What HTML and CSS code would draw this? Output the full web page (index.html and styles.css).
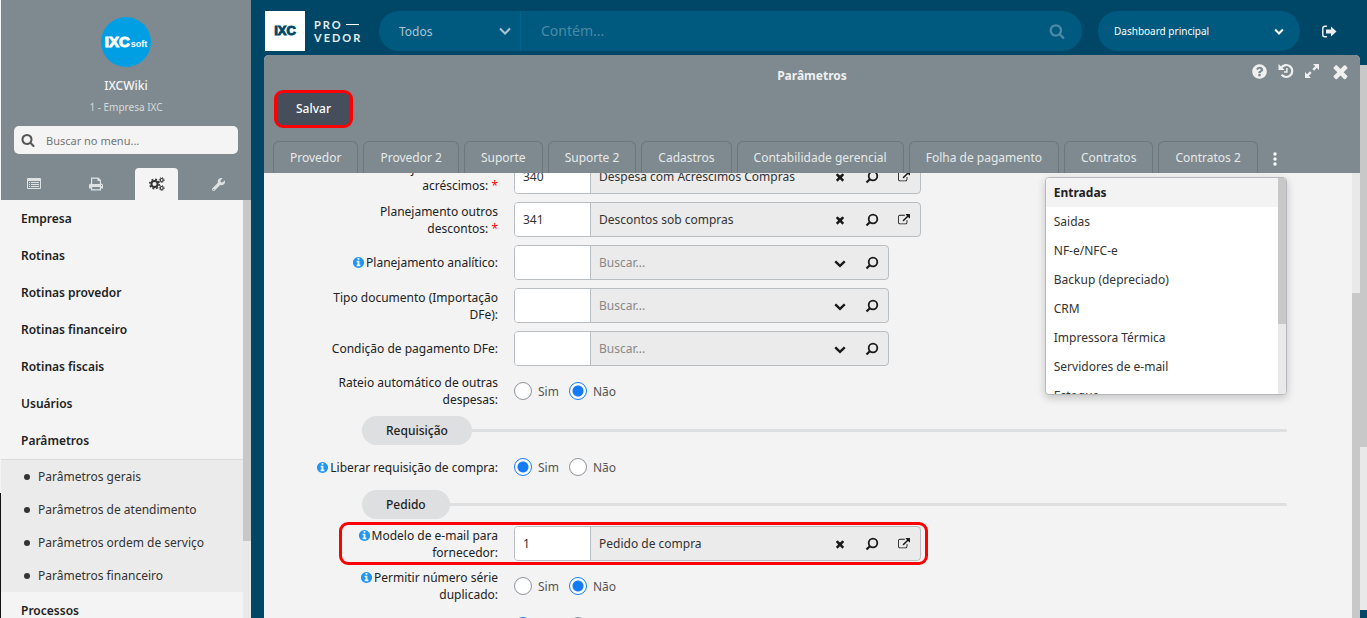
FILE: index.html
```html
<!DOCTYPE html>
<html lang="pt-BR">
<head>
<meta charset="utf-8">
<title>Parâmetros</title>
<link rel="stylesheet" href="styles.css">
</head>
<body>
<svg class="sprite" aria-hidden="true">
  <symbol id="search" viewBox="0 0 1792 1792"><path d="M1216 832q0-185-131.5-316.5t-316.5-131.5-316.5 131.5-131.5 316.5 131.5 316.5 316.5 131.5 316.5-131.5 131.5-316.5zm512 832q0 52-38 90t-90 38q-54 0-90-38l-343-342q-179 124-399 124-143 0-273.5-55.5t-225-150-150-225-55.5-273.5 55.5-273.5 150-225 225-150 273.5-55.5 273.5 55.5 225 150 150 225 55.5 273.5q0 220-124 399l343 343q37 37 37 90z"/></symbol>
  <symbol id="times" viewBox="0 0 1792 1792"><path d="M1490 1322q0 40-28 68l-136 136q-28 28-68 28t-68-28l-294-294-294 294q-28 28-68 28t-68-28l-136-136q-28-28-28-68t28-68l294-294-294-294q-28-28-28-68t28-68l136-136q28-28 68-28t68 28l294 294 294-294q28-28 68-28t68 28l136 136q28 28 28 68t-28 68l-294 294 294 294q28 28 28 68z"/></symbol>
  <symbol id="chevron" viewBox="0 0 1792 1792"><path d="M1683 808l-742 741q-19 19-45 19t-45-19l-742-741q-19-19-19-45.500t19-45.500l166-165q19-19 45-19t45 19l531 531 531-531q19-19 45-19t45 19l166 165q19 19 19 45.500t-19 45.500z"/></symbol>
  <symbol id="info" viewBox="0 0 1792 1792"><path d="M1152 1376v-160q0-14-9-23t-23-9h-96v-512q0-14-9-23t-23-9h-320q-14 0-23 9t-9 23v160q0 14 9 23t23 9h96v320h-96q-14 0-23 9t-9 23v160q0 14 9 23t23 9h448q14 0 23-9t9-23zm-128-896v-160q0-14-9-23t-23-9h-192q-14 0-23 9t-9 23v160q0 14 9 23t23 9h192q14 0 23-9t9-23zm640 416q0 209-103 385.500t-279.500 279.500-385.500 103-385.500-103-279.500-279.500-103-385.500 103-385.500 279.500-279.500 385.500-103 385.500 103 279.500 279.500 103 385.500z"/></symbol>
  <symbol id="help" viewBox="0 0 1792 1792"><path d="M1024 1376v-192q0-14-9-23t-23-9h-192q-14 0-23 9t-9 23v192q0 14 9 23t23 9h192q14 0 23-9t9-23zm256-672q0-88-55.500-163t-138.500-116-170-41q-243 0-371 213-15 24 8 42l132 100q7 6 19 6 16 0 25-12 53-68 86-92 34-24 86-24 48 0 85.500 26t37.500 59q0 38-20 61t-68 45q-63 28-115.500 86.500t-52.500 125.500v36q0 14 9 23t23 9h192q14 0 23-9t9-23q0-19 21.500-49.500t54.500-49.500q32-18 49-28.500t46-35 44.500-48 28-60.500 12.500-81zm384 192q0 209-103 385.500t-279.500 279.500-385.500 103-385.500-103-279.500-279.500-103-385.500 103-385.500 279.500-279.500 385.500-103 385.500 103 279.500 279.500 103 385.500z"/></symbol>
  <symbol id="external" viewBox="0 0 1792 1792"><path d="M1408 928v320q0 119-84.500 203.500t-203.500 84.500h-832q-119 0-203.500-84.500t-84.500-203.500v-832q0-119 84.500-203.500t203.500-84.500h704q14 0 23 9t9 23v64q0 14-9 23t-23 9h-704q-66 0-113 47t-47 113v832q0 66 47 113t113 47h832q66 0 113-47t47-113v-320q0-14 9-23t23-9h64q14 0 23 9t9 23zm384-864v512q0 26-19 45t-45 19-45-19l-176-176-652 652q-10 10-23 10t-23-10l-114-114q-10-10-10-23t10-23l652-652-176-176q-19-19-19-45t19-45 45-19h512q26 0 45 19t19 45z"/></symbol>
  <symbol id="lens" viewBox="0 0 14 14"><circle cx="8" cy="6" r="4.300" fill="none" stroke="currentColor" stroke-width="1.800"/><path d="M4.800 9.200L1.500 12.500" stroke="currentColor" stroke-width="2.200"/></symbol>
  <symbol id="wrench" viewBox="0 0 512 512"><path d="M507.730 109.100c-2.240-9.030-13.540-12.090-20.120-5.510l-74.360 74.360-67.880-11.310-11.310-67.880 74.360-74.360c6.620-6.620 3.430-17.900-5.660-20.160-47.380-11.740-99.550.910-136.580 37.930-39.640 39.640-50.550 97.100-34.050 147.200L18.740 402.760c-24.990 24.990-24.990 65.510 0 90.500 24.990 24.990 65.510 24.990 90.500 0l213.210-213.210c50.120 16.710 107.470 5.680 147.370-34.220 37.070-37.070 49.700-89.320 37.910-136.730zM64 472c-13.250 0-24-10.750-24-24 0-13.260 10.750-24 24-24s24 10.750 24 24c0 13.250-10.750 24-24 24z"/></symbol>
  <symbol id="list" viewBox="0 0 14 12"><path fill-rule="evenodd" d="M1 0h12a1 1 0 0 1 1 1v9a1 1 0 0 1-1 1H1a1 1 0 0 1-1-1V1a1 1 0 0 1 1-1zM1 3v7h12V3zM2 4h1v1H2zm2 0h8v1H4zM2 6h1v1H2zm2 0h8v1H4zM2 8h1v1H2zm2 0h8v1H4z"/></symbol>
  <symbol id="print" viewBox="0 0 14 13"><path fill-rule="evenodd" d="M2 0h7.500L12 2.500V6a2 2 0 0 1 2 2v3h-2v2H2v-2H0V8a2 2 0 0 1 2-2zM3.200 1.200V6.500h7.600V3.600H8.500V1.200zM3.200 9.500v2.300h7.600V9.500zM12 7.500v1h1v-1z"/></symbol>
  <symbol id="cogs" viewBox="0 0 16 14"><g fill="none" stroke="currentColor"><circle cx="5.500" cy="7" r="3.100" stroke-width="2"/><circle cx="5.500" cy="7" r="4.700" stroke-width="1.600" stroke-dasharray="1.900 1.791"/><circle cx="12.700" cy="3" r="1.500" stroke-width="1.200"/><circle cx="12.700" cy="3" r="2.500" stroke-width=".900" stroke-dasharray="1 .963"/><circle cx="12.700" cy="11" r="1.500" stroke-width="1.200"/><circle cx="12.700" cy="11" r="2.500" stroke-width=".900" stroke-dasharray="1 .963"/></g></symbol>
  <symbol id="history" viewBox="0 0 16 16"><path d="M3.300 4.600A6 6 0 1 1 3.600 11.800" fill="none" stroke="currentColor" stroke-width="2.200"/><path d="M.500 1v6h6z"/><path d="M8.900 5v4H6" fill="none" stroke="currentColor" stroke-width="1.500"/></symbol>
  <symbol id="expand" viewBox="0 0 16 16"><path d="M9 1h6v6zM1 9v6h6z"/><path d="M12.500 3.500L9.200 6.800M6.800 9.200L3.500 12.500" stroke="currentColor" stroke-width="2.400"/></symbol>
  <symbol id="logout" viewBox="0 0 15 12"><path d="M5 .800H2.800a2 2 0 0 0-2 2v6.400a2 2 0 0 0 2 2H5" fill="none" stroke="currentColor" stroke-width="1.500"/><path d="M9 1l5.500 5L9 11V8H4V4h5z"/></symbol>
</svg>

<div class="app">
  <aside class="sidebar">
    <header class="profile">
      <div class="avatar"><b>IXC</b><span>soft</span></div>
      <strong class="user">IXCWiki</strong>
      <span class="company">1 - Empresa IXC</span>
      <label class="menu-search">
        <svg class="icon i14"><use href="#search"/></svg>
        <input type="search" placeholder="Buscar no menu..." aria-label="Buscar no menu">
      </label>
      <nav class="side-tabs">
        <button aria-label="Lista"><svg class="icon i14"><use href="#list"/></svg></button>
        <button aria-label="Imprimir"><svg class="icon i14"><use href="#print"/></svg></button>
        <button class="active" aria-label="Configurações"><svg class="icon i16"><use href="#cogs"/></svg></button>
        <button aria-label="Ferramentas"><svg class="icon i13"><use href="#wrench"/></svg></button>
      </nav>
    </header>
    <div class="menu-area">
      <nav class="menu">
        <a href="#">Empresa</a>
        <a href="#">Rotinas</a>
        <a href="#">Rotinas provedor</a>
        <a href="#">Rotinas financeiro</a>
        <a href="#">Rotinas fiscais</a>
        <a href="#">Usuários</a>
        <a href="#">Parâmetros</a>
        <ul class="submenu">
          <li><a href="#">Parâmetros gerais</a></li>
          <li><a href="#">Parâmetros de atendimento</a></li>
          <li><a href="#">Parâmetros ordem de serviço</a></li>
          <li><a href="#">Parâmetros financeiro</a></li>
        </ul>
        <a href="#">Processos</a>
      </nav>
      <div class="scrollbar menu-scroll"><i></i></div>
    </div>
  </aside>

  <div class="main">
    <header class="topbar">
      <div class="logo">
        <span class="logo-mark">IXC</span>
        <span class="logo-name"><span class="first">PRO<i></i></span><span>VEDOR</span></span>
      </div>
      <div class="search">
        <label class="scope">
          <select aria-label="Escopo"><option>Todos</option></select>
          <svg class="icon thin" viewBox="0 0 12 8"><path d="M1 1.500l5 5 5-5"/></svg>
        </label>
        <input type="search" placeholder="Contém..." aria-label="Contém">
        <button aria-label="Buscar"><svg class="icon i16"><use href="#search"/></svg></button>
      </div>
      <label class="dashboard">
        <select aria-label="Dashboard"><option>Dashboard principal</option></select>
        <svg class="icon i10"><use href="#chevron"/></svg>
      </label>
      <button class="logout" aria-label="Sair"><svg class="icon i15"><use href="#logout"/></svg></button>
    </header>

    <div class="workspace">
      <section class="window">
        <header class="window-head">
          <div class="title-row">
            <h1>Parâmetros</h1>
            <div class="window-actions">
              <button aria-label="Ajuda"><svg class="icon i17"><use href="#help"/></svg></button>
              <button aria-label="Histórico"><svg class="icon i16"><use href="#history"/></svg></button>
              <button aria-label="Expandir"><svg class="icon i16"><use href="#expand"/></svg></button>
              <button aria-label="Fechar"><svg class="icon i21"><use href="#times"/></svg></button>
            </div>
          </div>
          <button class="save">Salvar</button>
          <nav class="tabs">
            <button>Provedor</button>
            <button>Provedor 2</button>
            <button>Suporte</button>
            <button>Suporte 2</button>
            <button>Cadastros</button>
            <button>Contabilidade gerencial</button>
            <button>Folha de pagamento</button>
            <button>Contratos</button>
            <button>Contratos 2</button>
            <div class="more">
              <button aria-label="Mais abas"><svg class="icon dots" viewBox="0 0 4 14"><circle cx="2" cy="2" r="1.700"/><circle cx="2" cy="7" r="1.700"/><circle cx="2" cy="12" r="1.700"/></svg></button>
              <div class="dropdown">
                <ul>
                  <li><a class="current" href="#">Entradas</a></li>
                  <li><a href="#">Saidas</a></li>
                  <li><a href="#">NF-e/NFC-e</a></li>
                  <li><a href="#">Backup (depreciado)</a></li>
                  <li><a href="#">CRM</a></li>
                  <li><a href="#">Impressora Térmica</a></li>
                  <li><a href="#">Servidores de e-mail</a></li>
                  <li><a href="#">Estoque</a></li>
                </ul>
                <div class="scrollbar drop-scroll"><i></i></div>
              </div>
            </div>
          </nav>
        </header>

        <div class="window-body">
          <form class="form">
            <div class="row">
              <label class="caption" for="f1">Planejamento outros acréscimos:&nbsp;<em>*</em></label>
              <div class="lookup"><input class="code" id="f1" value="340"><input class="desc" aria-label="Descrição" value="Despesa com Acréscimos Compras"><button type="button" aria-label="Limpar"><svg class="icon i12"><use href="#times"/></svg></button><button type="button" aria-label="Buscar"><svg class="icon i14"><use href="#lens"/></svg></button><button type="button" aria-label="Abrir"><svg class="icon i12"><use href="#external"/></svg></button></div>
            </div>
            <div class="row">
              <label class="caption" for="f2">Planejamento outros descontos:&nbsp;<em>*</em></label>
              <div class="lookup"><input class="code" id="f2" value="341"><input class="desc" aria-label="Descrição" value="Descontos sob compras"><button type="button" aria-label="Limpar"><svg class="icon i12"><use href="#times"/></svg></button><button type="button" aria-label="Buscar"><svg class="icon i14"><use href="#lens"/></svg></button><button type="button" aria-label="Abrir"><svg class="icon i12"><use href="#external"/></svg></button></div>
            </div>
            <div class="row">
              <label class="caption" for="f3"><svg class="icon info"><use href="#info"/></svg>Planejamento analítico:</label>
              <div class="lookup"><input class="code" id="f3"><input class="desc" aria-label="Descrição" placeholder="Buscar..."><button type="button" aria-label="Listar"><svg class="icon i12"><use href="#chevron"/></svg></button><button type="button" aria-label="Buscar"><svg class="icon i14"><use href="#lens"/></svg></button></div>
            </div>
            <div class="row">
              <label class="caption" for="f4">Tipo documento (Importação DFe):</label>
              <div class="lookup"><input class="code" id="f4"><input class="desc" aria-label="Descrição" placeholder="Buscar..."><button type="button" aria-label="Listar"><svg class="icon i12"><use href="#chevron"/></svg></button><button type="button" aria-label="Buscar"><svg class="icon i14"><use href="#lens"/></svg></button></div>
            </div>
            <div class="row">
              <label class="caption" for="f5">Condição de pagamento DFe:</label>
              <div class="lookup"><input class="code" id="f5"><input class="desc" aria-label="Descrição" placeholder="Buscar..."><button type="button" aria-label="Listar"><svg class="icon i12"><use href="#chevron"/></svg></button><button type="button" aria-label="Buscar"><svg class="icon i14"><use href="#lens"/></svg></button></div>
            </div>
            <div class="row" role="radiogroup" aria-labelledby="g1">
              <span class="caption" id="g1">Rateio automático de outras despesas:</span>
              <div class="choices"><label><input type="radio" name="rateio">Sim</label><label><input type="radio" name="rateio" checked>Não</label></div>
            </div>

            <h2 class="section"><span>Requisição</span></h2>
            <div class="row" role="radiogroup" aria-labelledby="g2">
              <span class="caption" id="g2"><svg class="icon info"><use href="#info"/></svg>Liberar requisição de compra:</span>
              <div class="choices"><label><input type="radio" name="liberar" checked>Sim</label><label><input type="radio" name="liberar">Não</label></div>
            </div>

            <h2 class="section"><span>Pedido</span></h2>
            <div class="row marked">
              <label class="caption" for="f6"><svg class="icon info"><use href="#info"/></svg>Modelo de e-mail para fornecedor:</label>
              <div class="lookup"><input class="code" id="f6" value="1"><input class="desc" aria-label="Descrição" value="Pedido de compra"><button type="button" aria-label="Limpar"><svg class="icon i12"><use href="#times"/></svg></button><button type="button" aria-label="Buscar"><svg class="icon i14"><use href="#lens"/></svg></button><button type="button" aria-label="Abrir"><svg class="icon i12"><use href="#external"/></svg></button></div>
            </div>
            <div class="row" role="radiogroup" aria-labelledby="g3">
              <span class="caption" id="g3"><svg class="icon info"><use href="#info"/></svg>Permitir número série duplicado:</span>
              <div class="choices"><label><input type="radio" name="serie">Sim</label><label><input type="radio" name="serie" checked>Não</label></div>
            </div>
            <div class="row">
              <span class="caption"></span>
              <div class="choices"><input type="radio" name="extra" aria-label="Opção 1" checked><input class="apart" type="radio" name="extra" aria-label="Opção 2"></div>
            </div>
          </form>
          <div class="scrollbar body-scroll"><i></i></div>
        </div>
      </section>
      <div class="scrollbar page-scroll"><i></i></div>
    </div>
  </div>
</div>
</body>
</html>
```
FILE: styles.css
```css
* { box-sizing: border-box; }

body {
  margin: 0;
  font: 12px/17px "Noto Sans", "Open Sans", sans-serif;
  color: #222;
  background: #004767;
}

button, input, select { font: inherit; color: inherit; border: 0; margin: 0; padding: 0; background: none; }
button, select { cursor: pointer; }
input[type="search"] { appearance: none; outline: none; }
select { appearance: none; outline: none; }
a { color: inherit; text-decoration: none; }
ul { list-style: none; margin: 0; padding: 0; }

.sprite { position: absolute; width: 0; height: 0; }
.icon { display: block; flex: none; fill: currentColor; }
.i10 { width: 10px; height: 10px; }
.i12 { width: 12px; height: 12px; }
.i13 { width: 13px; height: 13px; }
.i14 { width: 14px; height: 14px; }
.i15 { width: 15px; height: 15px; }
.i16 { width: 16px; height: 16px; }
.i17 { width: 17px; height: 17px; }
.i21 { width: 21px; height: 21px; }

.app { display: flex; height: 100vh; overflow: hidden; }

/* Scrollbars */
.scrollbar { flex: none; width: 8px; background: #e9e9e9; }
.scrollbar i { display: block; background: #c8c8c8; }
.menu-scroll i { height: 341px; }
.drop-scroll i { height: 146px; }
.body-scroll { padding-top: 120px; }
.body-scroll i { height: 100%; }
.page-scroll { width: 7px; margin: 10px 0 8px; }
.page-scroll i { height: 70%; }

/* Sidebar */
.sidebar {
  flex: none;
  display: flex;
  flex-direction: column;
  width: 251px;
  padding-left: 1px;
  background: linear-gradient(#f4f4f4 493px, #111 493px);
}
.profile {
  display: flex;
  flex-direction: column;
  align-items: center;
  height: 200px;
  padding-top: 17px;
  background: #7e8a8f;
  color: #f4f4f4;
}
.avatar {
  display: flex;
  align-items: baseline;
  justify-content: center;
  gap: 1px;
  width: 50px;
  height: 50px;
  border-radius: 50%;
  background: #009fe3;
  color: #fff;
  font: 700 15px/50px "Liberation Sans", sans-serif;
}
.avatar b { -webkit-text-stroke: 1px #fff; }
.avatar span { font-size: 9px; }
.user { margin-top: 10px; font-weight: 500; }
.company { margin-top: 5px; font-size: 10px; color: #d6dadc; }
.menu-search {
  display: flex;
  align-items: center;
  align-self: stretch;
  gap: 11px;
  height: 28px;
  margin: 10px 13px 0;
  padding: 0 7px;
  border-radius: 5px;
  background: #f4f4f4;
  color: #555;
}
.menu-search input { flex: 1; min-width: 0; font-size: 11px; }
.menu-search input::placeholder { color: #757575; }
.side-tabs { display: flex; align-self: stretch; margin-top: 14px; padding: 0 2px; }
.side-tabs button { flex: 1; display: flex; align-items: center; justify-content: center; height: 32px; color: #dfe2e3; }
.side-tabs .active { flex: none; width: 43px; margin: 0 9px; border-radius: 4px 4px 0 0; background: #f4f4f4; color: #333; }

.menu-area { flex: 1; display: flex; min-height: 0; }
.menu { flex: 1; overflow: hidden; background: #f4f4f4; }
.menu > a { display: block; padding: 10px 20px; font-weight: 600; }
.submenu { border-top: 1px solid #dadada; background: #ebebeb; color: #333; }
.submenu a { display: flex; align-items: center; gap: 8px; padding: 8px 23px; white-space: nowrap; }
.submenu a::before { content: ""; width: 6px; height: 6px; border-radius: 50%; background: #333; }

/* Top bar */
.main { flex: 1; display: flex; flex-direction: column; min-width: 0; }
.topbar { display: flex; align-items: center; height: 55px; padding: 7px 30px 0 14px; }
.topbar, .topbar select { color: #fff; }
.logo { display: flex; align-items: center; gap: 9px; width: 114px; }
.logo-mark { width: 40px; height: 40px; background: #fff; color: #004767; font: 700 13px/40px "Liberation Sans", sans-serif; text-align: center; -webkit-text-stroke: 1px #004767; }
.logo-name { display: flex; flex-direction: column; font: 700 11px/13px Lato, sans-serif; letter-spacing: 2px; color: #e8eef1; }
.first { display: flex; align-items: center; gap: 3px; }
.first i { width: 13px; height: 1px; background: #fff; }
.search { flex: 1; display: flex; align-items: center; height: 40px; padding-right: 17px; border-radius: 20px; background: #005a80; }
.scope { display: flex; align-items: center; width: 142px; height: 40px; padding: 0 9px 0 20px; border-right: 1px solid #00648c; }
.scope select { flex: 1; color: #a9c5d3; }
.thin { width: 12px; height: 8px; fill: none; stroke: #a9c5d3; stroke-width: 2; }
.search input { flex: 1; min-width: 0; padding: 0 20px; font-size: 14px; line-height: 20px; }
.search input::placeholder { color: #4b8aa7; }
.search button { color: #4b8aa7; }
.dashboard { display: flex; align-items: center; width: 202px; height: 40px; margin-left: 16px; padding: 0 16px; border-radius: 20px; background: #005a80; }
.dashboard select { flex: 1; font-size: 10px; }
.logout { margin-left: 22px; color: #eee; }

/* Window */
.workspace { flex: 1; display: flex; min-height: 0; padding-left: 13px; }
.window { flex: 1; display: flex; flex-direction: column; min-width: 0; border-radius: 5px 5px 0 0; background: #f3f3f3; }
.window-head { height: 118px; padding: 0 9px; border-radius: 5px 5px 0 0; background: #7e8a8f; color: #f0f0f0; }
.title-row { display: grid; grid-template-columns: 1fr auto 1fr; align-items: center; height: 35px; }
.title-row h1 { grid-column: 2; margin: 6px 0 0; font-size: 12px; font-weight: 700; }
.window-actions { display: flex; align-items: center; justify-content: flex-end; gap: 10px; padding-bottom: 3px; }
.save {
  display: block;
  width: 79px;
  height: 38px;
  margin: 0 0 13px 1px;
  padding-bottom: 2px;
  border: 3px solid #f00;
  border-radius: 9px;
  background: #454e5a;
  color: #fff;
  font-weight: 500;
}
.tabs { display: flex; gap: 5px; }
.tabs > button { height: 32px; padding: 0 16px; border: 1px solid #6b777d; border-bottom: 0; border-radius: 6px 6px 0 0; color: #e6e9ea; white-space: nowrap; }
.more { position: relative; width: 24px; }
.more > button { display: flex; align-items: center; justify-content: center; width: 100%; height: 36px; color: #fff; }
.dots { width: 4px; height: 14px; }
.dropdown {
  position: absolute;
  top: 36px;
  right: 0;
  z-index: 2;
  display: flex;
  width: 242px;
  height: 218px;
  overflow: hidden;
  border: 1px solid #b5b9bd;
  border-radius: 4px;
  background: #fff;
  color: #333;
  box-shadow: 0 3px 8px #0003;
}
.dropdown ul { flex: 1; }
.dropdown li a { display: block; padding: 6px 8px; }
.dropdown .current { background: #f3f3f3; color: #222; font-weight: 700; }

/* Form */
.window-body { flex: 1; display: flex; min-height: 0; overflow: hidden; }
.form { flex: 1; min-width: 0; margin-top: -14px; padding: 0 65px 0 48px; }
.row { position: relative; display: flex; align-items: center; gap: 16px; width: fit-content; min-height: 30px; margin-bottom: 8px; }
.caption { width: 186px; text-align: right; }
.caption em { color: #f00; font-style: normal; }
.info { display: inline-block; width: 13px; height: 13px; margin-right: 1px; vertical-align: -2px; color: #2196f3; }
.lookup { display: flex; height: 35px; overflow: hidden; border: 1px solid #b9bec3; border-radius: 4px; background: #ebebeb; }
.lookup input { outline: none; padding: 0 8px; color: #333; }
.lookup .code { width: 76px; border-right: 1px solid #b9bec3; background: #fff; }
.lookup .desc { width: 233px; }
.lookup input::placeholder { color: #888; }
.lookup button { display: flex; align-items: center; justify-content: center; width: 32px; color: #1a1a1a; }
.choices { display: flex; gap: 10px; color: #555; }
.choices label { display: flex; align-items: center; gap: 6px; }
.choices input { appearance: none; width: 18px; height: 18px; border: 1px solid #8d949a; border-radius: 50%; background: #fff; }
.choices input:checked { border-color: #147bf5; background: radial-gradient(circle, #147bf5 5px, #fff 6px); }
.choices .apart { margin-left: 27px; }
.section { display: flex; align-items: center; margin: 0 0 7px 50px; font-size: 12px; font-weight: 500; }
.section::after { content: ""; flex: 1; height: 3px; border-radius: 0 2px 2px 0; background: #dddfe0; }
.section span { padding: 6px 24px; border-radius: 15px; background: #dddfe0; }
.marked::after { content: ""; position: absolute; inset: -4px -7px -4px 27px; border: 3px solid #f00; border-radius: 9px; pointer-events: none; }
```
